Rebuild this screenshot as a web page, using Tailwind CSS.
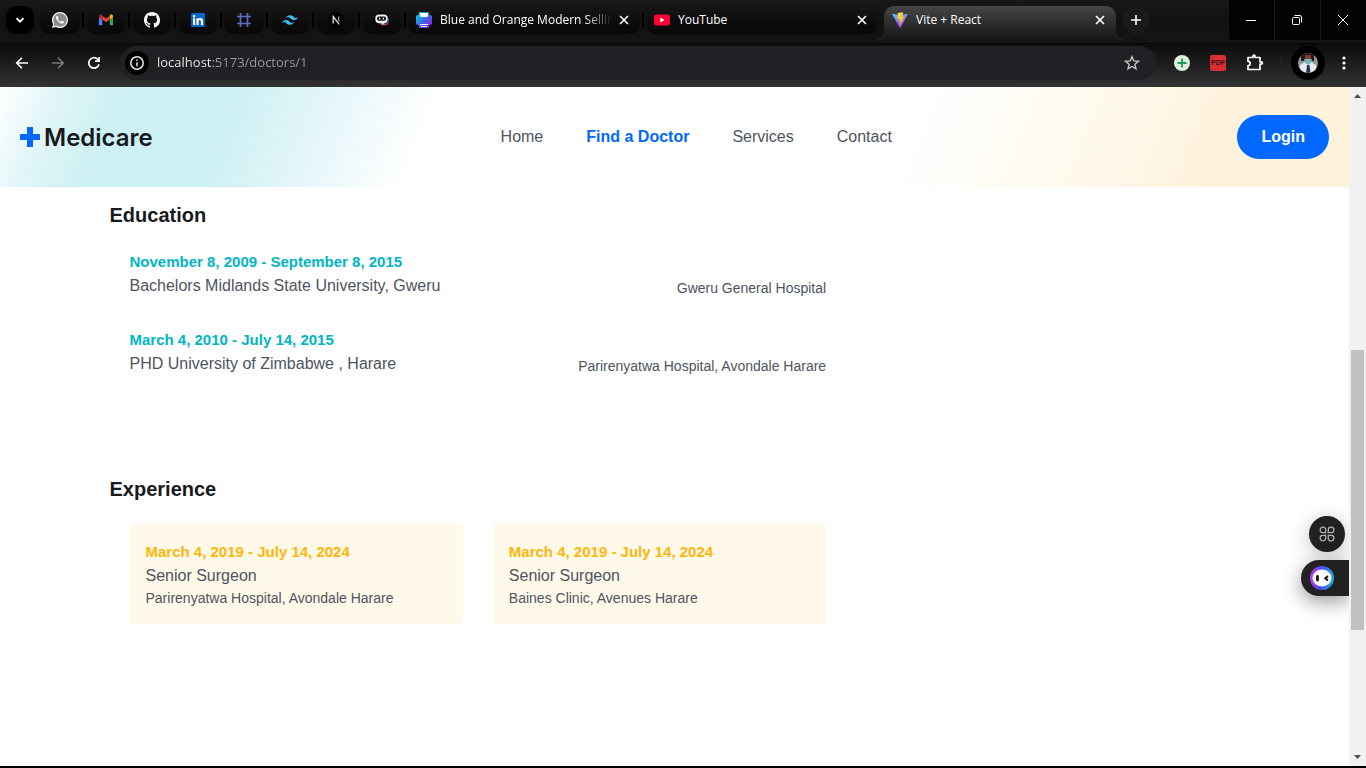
<!DOCTYPE html>
<html lang="en">
<head>
<meta charset="utf-8">
<title>Vite + React</title>
<script src="https://cdn.jsdelivr.net/npm/@tailwindcss/browser@4"></script>
</head>
<body class="flex h-screen flex-col overflow-hidden bg-black pb-0.5 font-['Liberation_Sans',Arial,sans-serif]">

<!-- Tab strip -->
<div class="flex h-[43px] shrink-0 items-start bg-linear-to-b from-[#181818] via-[#111111] to-[#141414] font-['Open_Sans','Noto_Sans',sans-serif] text-xs text-white">
  <button aria-label="Search tabs" class="mt-1.5 ml-1.5 flex size-7 shrink-0 items-center justify-center rounded-[10px] bg-black">
    <svg class="size-4" viewBox="0 0 16 16" fill="none" stroke="#fff" stroke-width="1.8"><path d="M4.5 6.2 8 9.7l3.5-3.5"/></svg>
  </button>

  <div class="mt-1.5 ml-1.5 flex min-w-0 items-center gap-0.5">
    <button aria-label="WhatsApp" class="flex h-7 w-10 items-center justify-center rounded-b-[10px] bg-linear-to-b from-[#161616] to-[#070707]">
      <svg class="size-4" viewBox="0 0 24 24"><path fill="#f1f1f1" d="M12 0A12 12 0 0 0 1.700 18.100L0 24l6-1.600A12 12 0 1 0 12 0z"/><path fill="#8d8d8d" d="M12 2a10 10 0 0 0-8.500 15.300l-1 3.900 4-1A10 10 0 1 0 12 2z"/><path fill="#fff" d="M8.500 6.500c-.5-.9-1.200-.5-1.700 0-1.200 1.300-.9 3.300.3 5 1.900 2.900 4.500 5.300 7.800 5.900 1.500.2 3-.9 3-2.500 0-.7-2.600-1.900-3.100-1.800-.6.200-1 1.600-1.600 1.500-1.900-.5-3.600-2.300-4.300-3.800-.2-.6 1-1.200.9-1.900z"/></svg>
    </button>
    <span class="h-4 w-0.5 bg-black"></span>
    <button aria-label="Gmail" class="flex h-7 w-10 items-center justify-center rounded-b-[10px] bg-linear-to-b from-[#161616] to-[#070707]">
      <svg class="size-3.5" viewBox="0 2 24 20"><path fill="#4285f4" d="M1.500 21h4V11L0 7v12.500c0 .8.700 1.500 1.500 1.500z"/><path fill="#34a853" d="M18.500 21h4c.8 0 1.500-.7 1.500-1.500V7l-5.500 4z"/><path fill="#fbbc04" d="M18.500 4.500V11L24 7V5.500c0-2.500-2.600-3.700-4.500-2.300z"/><path fill="#ea4335" d="M5.500 11V4.500l6.500 5 6.500-5V11L12 16z"/><path fill="#c5221f" d="M0 5.500V7l5.500 4V4.500l-1-1.300C2.600 1.800 0 3 0 5.500z"/></svg>
    </button>
    <span class="h-4 w-0.5 bg-black"></span>
    <button aria-label="GitHub" class="flex h-7 w-10 items-center justify-center rounded-b-[10px] bg-linear-to-b from-[#161616] to-[#070707]">
      <svg class="size-4" viewBox="0 0 16 16" fill="#fff"><path d="M8 0C3.580 0 0 3.580 0 8c0 3.540 2.290 6.530 5.470 7.590.4.070.55-.17.55-.38 0-.19-.01-.82-.01-1.490-2.010.37-2.530-.49-2.690-.94-.09-.23-.48-.94-.82-1.130-.28-.15-.68-.52-.01-.53.63-.01 1.080.58 1.230.82.72 1.210 1.870.87 2.330.66.070-.52.28-.87.51-1.070-1.780-.2-3.640-.89-3.640-3.950 0-.87.31-1.590.82-2.150-.08-.2-.36-1.020.08-2.120 0 0 .67-.21 2.200.82.64-.18 1.320-.27 2-.27s1.360.09 2 .27c1.530-1.040 2.200-.82 2.200-.82.44 1.100.16 1.920.08 2.120.51.56.82 1.270.82 2.150 0 3.070-1.870 3.750-3.650 3.950.29.25.54.73.54 1.480 0 1.070-.01 1.930-.01 2.200 0 .21.15.46.55.38A8.010 8.010 0 0 0 16 8c0-4.420-3.580-8-8-8z"/></svg>
    </button>
    <span class="h-4 w-0.5 bg-black"></span>
    <button aria-label="LinkedIn" class="flex h-7 w-10 items-center justify-center rounded-b-[10px] bg-linear-to-b from-[#161616] to-[#070707]">
      <svg class="size-3.5" viewBox="0 0 24 24"><rect width="24" height="24" rx="2" fill="#0a66c2"/><path fill="#fff" d="M3.500 9h3.600v11.500H3.500zM5.300 3.300a2.100 2.100 0 1 1 0 4.200 2.100 2.100 0 0 1 0-4.200zM9.400 9h3.400v1.600c.5-.9 1.700-1.900 3.500-1.900 3.600 0 4.300 2.400 4.300 5.500v6.300H17v-5.600c0-1.300 0-3-1.900-3s-2.100 1.400-2.100 2.900v5.700H9.400z"/></svg>
    </button>
    <span class="h-4 w-0.5 bg-black"></span>
    <button aria-label="Hashnode" class="flex h-7 w-10 items-center justify-center rounded-b-[10px] bg-linear-to-b from-[#161616] to-[#070707]">
      <svg class="size-4" viewBox="0 0 16 16" fill="none" stroke="#5b6ec0" stroke-width="1.700"><path d="M4.500 1v14M11.500 1v14M1 4.500h14M1 11.500h14"/></svg>
    </button>
    <span class="h-4 w-0.5 bg-black"></span>
    <button aria-label="Tailwind CSS" class="flex h-7 w-10 items-center justify-center rounded-b-[10px] bg-linear-to-b from-[#161616] to-[#070707]">
      <svg class="size-4" viewBox="0 0 24 24" fill="#38bdf8"><path d="M12 4.800c-3.200 0-5.200 1.600-6 4.800 1.200-1.600 2.600-2.200 4.200-1.800.9.200 1.600.9 2.300 1.700C13.700 10.700 15.100 12 18 12c3.200 0 5.200-1.600 6-4.800-1.200 1.600-2.600 2.200-4.200 1.800-.9-.2-1.600-.9-2.300-1.700C16.300 6.100 14.900 4.800 12 4.800zM6 12c-3.200 0-5.200 1.600-6 4.800 1.200-1.600 2.600-2.200 4.200-1.800.9.200 1.600.9 2.300 1.700C7.700 17.900 9.100 19.200 12 19.200c3.200 0 5.200-1.600 6-4.800-1.200 1.600-2.600 2.200-4.200 1.800-.9-.2-1.600-.9-2.300-1.700C10.300 13.300 8.900 12 6 12z"/></svg>
    </button>
    <span class="h-4 w-0.5 bg-black"></span>
    <button aria-label="Next.js" class="flex h-7 w-10 items-center justify-center rounded-b-[10px] bg-linear-to-b from-[#161616] to-[#070707]">
      <svg class="size-4" viewBox="0 0 16 16"><circle cx="8" cy="8" r="8" fill="#000"/><path d="M5.200 11.500v-7l6 7.800" fill="none" stroke="#ddd" stroke-width="1.300"/><path d="M10.700 4.500v5" stroke="#aaa" stroke-width="1.200"/></svg>
    </button>
    <span class="h-4 w-0.5 bg-black"></span>
    <button aria-label="Chat" class="flex h-7 w-10 items-center justify-center rounded-b-[10px] bg-linear-to-b from-[#161616] to-[#070707]">
      <svg class="size-4" viewBox="0 0 16 16"><circle cx="8" cy="8" r="8" fill="#000"/><path d="M5 11.500h6c2 0 3-1.500 3-4l.3 4.500-2.300 1.500H8z" fill="#a33a78"/><path d="M14 5.500c.9 1.500.9 4-.3 5.500" fill="none" stroke="#4b62c9"/><path d="M5 2.500h5A3.700 3.700 0 0 1 13.700 6.200v1.300A3.700 3.700 0 0 1 10 11.200L8.500 13 7.500 11.200H5A3.700 3.700 0 0 1 1.300 7.500V6.200A3.700 3.700 0 0 1 5 2.500z" fill="#eee"/><rect x="3" y="4.500" width="9" height="4.300" rx="2" fill="#111"/><path d="M5.700 5.700v1.700M9.300 5.700v1.700" stroke="#fff" stroke-width="1.300"/></svg>
    </button>
    <span class="h-4 w-0.5 bg-black"></span>
    <div class="flex h-7 w-58 items-center rounded-b-[10px] bg-linear-to-b from-[#161616] to-[#070707] px-2">
      <svg class="size-4 shrink-0" viewBox="0 0 16 16"><defs><linearGradient id="cube" x1="0" y1="0" x2="1" y2="1"><stop offset=".1" stop-color="#06c8d5"/><stop offset=".5" stop-color="#356ce6"/><stop offset=".85" stop-color="#8427e6"/></linearGradient></defs><path d="M3 0h10v2l3 2v8l-3 2v2H3v-2l-3-2V4l3-2z" fill="url(#cube)"/><path d="M4 1h8v3l-1 1H5L4 4zM4 12h8v1H4zM5 14h6v1H5z" fill="#fff"/></svg>
      <button class="ml-2 min-w-0 flex-1 text-left whitespace-nowrap mask-r-from-84% mask-r-to-100%">Blue and Orange Modern Sellin</button>
      <button aria-label="Close tab" class="ml-1 flex size-4 shrink-0 items-center justify-center"><svg class="size-2.5" viewBox="0 0 10 10" stroke="#fff" stroke-width="1.600"><path d="m1 1 8 8M9 1 1 9"/></svg></button>
    </div>
    <span class="h-4 w-0.5 bg-black"></span>
    <div class="flex h-7 w-58 items-center rounded-b-[10px] bg-linear-to-b from-[#161616] to-[#070707] px-2">
      <svg class="size-4 shrink-0" viewBox="0 0 16 16"><rect y="2.500" width="16" height="11" rx="2.500" fill="#ff0033"/><path d="m6.300 5.600 4.200 2.400-4.200 2.400z" fill="#fff"/></svg>
      <button class="ml-2 min-w-0 flex-1 overflow-hidden text-left whitespace-nowrap">YouTube</button>
      <button aria-label="Close tab" class="ml-1 flex size-4 shrink-0 items-center justify-center"><svg class="size-2.5" viewBox="0 0 10 10" stroke="#fff" stroke-width="1.600"><path d="m1 1 8 8M9 1 1 9"/></svg></button>
    </div>
  </div>

  <div class="relative mt-1.5 ml-1.5 flex h-[37px] w-58 shrink-0 items-start rounded-t-[10px] bg-linear-to-b from-[#464646] to-[#141414] px-2 pt-1.5">
    <span class="absolute bottom-[3px] -left-2.5 size-2.5 bg-[radial-gradient(circle_at_0_0,transparent_10px,#1e1e1e_10px)]"></span>
    <span class="absolute -right-2.5 bottom-[3px] size-2.5 bg-[radial-gradient(circle_at_100%_0,transparent_10px,#1e1e1e_10px)]"></span>
    <svg class="size-4 shrink-0" viewBox="0 0 32 32"><defs><linearGradient id="va" x1="0" y1="0" x2=".6" y2="1"><stop stop-color="#41d1ff"/><stop offset="1" stop-color="#bd34fe"/></linearGradient><linearGradient id="vb" x1=".4" y1="0" x2=".6" y2="1"><stop stop-color="#ffea83"/><stop offset=".1" stop-color="#ffdd35"/><stop offset="1" stop-color="#ffa800"/></linearGradient></defs><path fill="url(#va)" d="M31.800 4.700 17 31.200c-.3.500-1 .5-1.400 0L.2 4.700c-.4-.6.1-1.300.8-1.200L16 6.200l15-2.700c.7-.1 1.200.6.800 1.200z"/><path fill="url(#vb)" d="m23 .1-11 2.100c-.2 0-.3.200-.3.400L11 14c0 .3.200.5.500.4l3-.7c.3-.1.600.2.500.5l-.9 4.500c-.1.300.2.600.5.500l1.900-.6c.3-.1.600.2.500.5l-1.500 7c-.1.500.5.700.7.300l8.300-16.800c.1-.3-.1-.6-.5-.6l-3.200.600c-.3.100-.5-.2-.5-.5l2.300-8.300c.1-.4-.2-.7-.5-.7z"/></svg>
    <button class="ml-2 min-w-0 flex-1 overflow-hidden text-left whitespace-nowrap">Vite + React</button>
    <button aria-label="Close tab" class="ml-1 flex size-4 shrink-0 items-center justify-center"><svg class="size-2.5" viewBox="0 0 10 10" stroke="#fff" stroke-width="1.600"><path d="m1 1 8 8M9 1 1 9"/></svg></button>
  </div>
  <button aria-label="New tab" class="mt-1.5 ml-1.5 flex size-7 shrink-0 items-center justify-center rounded-full bg-[#1a1a1a]">
    <svg class="size-2.5" viewBox="0 0 10 10" stroke="#fff" stroke-width="1.600"><path d="M0 5h10M5 0v10"/></svg>
  </button>

  <div class="ml-auto flex h-10 shrink-0 gap-px bg-[#181818]">
    <button aria-label="Minimize" class="flex w-[45px] items-center justify-center bg-[#020202] pr-0.5"><svg class="size-2.5" viewBox="0 0 10 10" stroke="#fff"><path d="M0 5.500h10"/></svg></button>
    <button aria-label="Restore" class="flex w-[45px] items-center justify-center bg-[#020202] pr-0.5"><svg class="size-2.5" viewBox="0 0 10 10" fill="none" stroke="#fff"><rect x=".5" y="2.500" width="7" height="7" rx="1"/><path d="M2.500.5H8A1.500 1.500 0 0 1 9.500 2v5.500"/></svg></button>
    <button aria-label="Close" class="flex w-[45px] items-center justify-center bg-[#020202] pr-0.5"><svg class="size-2.5" viewBox="0 0 10 10" stroke="#fff"><path d="m0 0 10 10M10 0 0 10"/></svg></button>
  </div>
</div>

<!-- Toolbar -->
<div class="flex h-11 shrink-0 items-center border-t border-[#070707] bg-linear-to-b from-[#0c0c0c] to-[#333333] px-[14px] pb-1.5">
  <button aria-label="Back" class="flex size-4 shrink-0 items-center justify-center"><svg class="size-4" viewBox="0 0 16 16" fill="none" stroke="#fff" stroke-width="1.600"><path d="M14 8H3M8 2.700 2.700 8 8 13.300"/></svg></button>
  <button aria-label="Forward" class="ml-5 flex size-4 shrink-0 items-center justify-center"><svg class="size-4" viewBox="0 0 16 16" fill="none" stroke="#777" stroke-width="1.600"><path d="M2 8h11M8 2.700 13.300 8 8 13.300"/></svg></button>
  <button aria-label="Reload" class="ml-5 flex size-4 shrink-0 items-center justify-center"><svg class="size-4" viewBox="0 0 16 16" fill="none" stroke="#fff" stroke-width="1.700"><path d="M13 9.200A5.200 5.200 0 1 1 11.700 4.300L13 5.600"/><path d="M13.100 2v4.200H9"/></svg></button>
  <div class="ml-[18px] flex h-[34px] min-w-0 flex-1 items-center rounded-full bg-[#202124] pr-4 pl-[5px]">
    <button aria-label="Site information" class="flex size-6 shrink-0 items-center justify-center rounded-full bg-black"><svg class="size-4" viewBox="0 0 16 16" fill="none" stroke="#e8e8e8" stroke-width="1.500"><circle cx="8" cy="8" r="6.200"/><path d="M8 7.200v4M8 4.500V6"/></svg></button>
    <input aria-label="Address" value="localhost:5173/doctors/1" class="ml-2 min-w-0 flex-1 bg-[linear-gradient(90deg,#f1f1f1_55px,#9a9da1_55px)] bg-clip-text font-['Open_Sans','Noto_Sans',sans-serif] text-[13px] text-transparent outline-none">
    <button aria-label="Bookmark this tab" class="flex size-4 shrink-0 items-center justify-center"><svg class="size-4" viewBox="0 0 16 16" fill="none" stroke="#c6c6c6" stroke-width="1.400"><path d="m8 1.600 1.800 4.300 4.700.4-3.600 3 1.100 4.600L8 11.500l-4 2.400 1.100-4.600-3.600-3 4.700-.4z"/></svg></button>
  </div>
  <button aria-label="Add extension" class="ml-[18px] flex size-4 shrink-0 items-center justify-center"><svg class="size-4" viewBox="0 0 16 16"><circle cx="8" cy="8" r="8" fill="#dff0dc"/><path d="M8 3.500v9M3.500 8h9" stroke="#16995a" stroke-width="1.800"/></svg></button>
  <button aria-label="PDF tools" class="ml-5 flex size-4 shrink-0 items-center justify-center rounded-xs bg-[#d93033] text-[7px] leading-4 font-bold text-[#3a0d10]">PDF</button>
  <button aria-label="Extensions" class="ml-5 flex size-[18px] shrink-0 items-center justify-center"><svg class="size-[18px]" viewBox="0 0 18 18" fill="none" stroke="#fff" stroke-width="1.700" stroke-linejoin="round"><path d="M2 3.500h5V2.200a1 1 0 0 1 2 0v1.300h5v4.300h1.200a1.200 1.200 0 0 1 0 2.400H14v5.300H2v-3.800a2.200 2.200 0 0 0 0-4.400z"/></svg></button>
  <span class="ml-4 h-4 w-0.5 bg-[#222222]"></span>
  <button aria-label="Profile" class="ml-[9px] flex size-[34px] shrink-0 items-center justify-center rounded-full bg-black"><svg class="size-5" viewBox="0 0 20 20"><defs><clipPath id="face"><circle cx="10" cy="10" r="10"/></clipPath></defs><g clip-path="url(#face)"><path fill="#8f9a9d" d="M0 0h20v20H0z"/><path fill="#2a1713" d="M3 0h13v8H3z"/><path fill="#7a4030" d="M7 2h6v5H7z"/><path fill="#e6ebef" d="m1 20 1-8 5-3h6l5 3 1 8z"/><path fill="#72b8b8" d="M6 6h8l-1 4-3 2-3-2z"/><path fill="#26384f" d="M9 12h2.500l1 8H8z"/></g></svg></button>
  <button aria-label="Menu" class="ml-[11px] flex size-4 shrink-0 items-center justify-center"><svg class="size-4" viewBox="0 0 16 16" fill="#fff"><circle cx="8" cy="3" r="1.600"/><circle cx="8" cy="8" r="1.600"/><circle cx="8" cy="13" r="1.600"/></svg></button>
</div>

<!-- Page viewport -->
<div class="flex min-h-0 flex-1">
  <div class="relative min-w-0 flex-1 overflow-hidden bg-white">
    <header class="flex h-25 items-center justify-between bg-[linear-gradient(112deg,#ffffff_0,#e3f6f8_4%,#ccf0f3_9%,#ccf0f3_17%,#e1f5f9_23%,#ffffff_32%,#ffffff_67%,#fffaf0_78%,#fff2dc_90%,#fff2dc_100%)] px-5">
      <a href="#" class="flex w-[135px] items-center gap-1">
        <svg class="size-5 shrink-0" viewBox="0 0 20 20" fill="#0067ff"><path d="M7.500 0h5a.5.5 0 0 1 .5.5V7h6.500a.5.5 0 0 1 .5.5v5a.5.5 0 0 1-.5.5H13v6.500a.5.5 0 0 1-.5.5h-5a.5.5 0 0 1-.5-.5V13H.5a.5.5 0 0 1-.5-.5v-5A.5.5 0 0 1 .5 7H7V.5a.5.5 0 0 1 .5-.5z"/></svg>
        <span class="pt-0.5 font-['Inter',sans-serif] text-2xl font-semibold text-[#181a1e]">Medicare</span>
      </a>
      <nav class="flex gap-[43px] text-base text-[#4e545f]">
        <a href="#">Home</a>
        <a href="#" class="font-bold text-[#0067ff]">Find a Doctor</a>
        <a href="#">Services</a>
        <a href="#">Contact</a>
      </nav>
      <button class="h-11 rounded-full bg-[#0067ff] px-6 pb-px text-base font-bold text-white">Login</button>
    </header>

    <main class="mx-auto grid max-w-[1170px] grid-cols-3 gap-[50px] px-5 pt-[13px] text-[#4e545f]">
      <div class="col-span-2">
        <section>
          <h3 class="text-xl/[30px] font-bold text-[#181a1e]">Education</h3>
          <ul class="flex flex-col gap-[30px] p-5">
            <li class="flex items-end justify-between">
              <div>
                <p class="text-[15px]/6 font-bold text-[#01b5c5]">November 8, 2009 - September 8, 2015</p>
                <p class="text-base/6">Bachelors Midlands State University, Gweru</p>
              </div>
              <p class="text-sm/5">Gweru General Hospital</p>
            </li>
            <li class="flex items-end justify-between">
              <div>
                <p class="text-[15px]/6 font-bold text-[#01b5c5]">March 4, 2010 - July 14, 2015</p>
                <p class="text-base/6">PHD University of Zimbabwe , Harare</p>
              </div>
              <p class="text-sm/5">Parirenyatwa Hospital, Avondale Harare</p>
            </li>
          </ul>
        </section>
        <section class="mt-[78px]">
          <h3 class="text-xl/[30px] font-bold text-[#181a1e]">Experience</h3>
          <ul class="grid grid-cols-2 gap-[30px] p-5">
            <li class="rounded bg-[#fff9ea] p-4">
              <p class="text-[15px]/6 font-bold text-[#feb60d]">March 4, 2019 - July 14, 2024</p>
              <p class="text-base/6">Senior Surgeon</p>
              <p class="text-sm/5">Parirenyatwa Hospital, Avondale Harare</p>
            </li>
            <li class="rounded bg-[#fff9ea] p-4">
              <p class="text-[15px]/6 font-bold text-[#feb60d]">March 4, 2019 - July 14, 2024</p>
              <p class="text-base/6">Senior Surgeon</p>
              <p class="text-sm/5">Baines Clinic, Avenues Harare</p>
            </li>
          </ul>
        </section>
      </div>
    </main>

    <!-- Floating assistant -->
    <div class="absolute right-0 bottom-[170px] flex flex-col items-end gap-2">
      <button aria-label="Assistant apps" class="mr-1 flex size-9 items-center justify-center rounded-full bg-[#212121] shadow-[0_4px_20px_rgba(0,0,0,0.25)]"><svg class="size-4" viewBox="0 0 16 16" fill="none" stroke="#b0b0b0" stroke-width="1.300"><path d="M6.700 6.700H3.700A2.500 2.500 0 0 1 1.200 4.200V3.700A2.500 2.500 0 0 1 3.700 1.200H4.200A2.500 2.500 0 0 1 6.700 3.700zM9.300 6.700V3.700A2.500 2.500 0 0 1 11.800 1.200H12.300A2.500 2.500 0 0 1 14.800 3.700V4.200A2.500 2.500 0 0 1 12.300 6.700zM6.700 9.300V12.300A2.500 2.500 0 0 1 4.200 14.800H3.700A2.500 2.500 0 0 1 1.200 12.300V11.800A2.500 2.500 0 0 1 3.700 9.300zM9.300 9.300H12.300A2.500 2.500 0 0 1 14.800 11.800V12.300A2.500 2.500 0 0 1 12.300 14.800H11.800A2.500 2.500 0 0 1 9.300 12.300z"/></svg></button>
      <button aria-label="Open assistant" class="flex h-9 w-12 items-center rounded-l-full bg-[#212121] pl-[9px] shadow-[0_6px_20px_rgba(0,0,0,0.4)]"><svg class="size-6" viewBox="0 0 24 24"><defs><linearGradient id="bot" x1="0" y1=".7" x2="1" y2=".8"><stop stop-color="#b83df0"/><stop offset=".45" stop-color="#4a4af5"/><stop offset="1" stop-color="#12b8e0"/></linearGradient></defs><circle cx="12" cy="12" r="12" fill="url(#bot)"/><ellipse cx="12" cy="12" rx="9.500" ry="8.500" fill="#fff"/><path d="M7.500 10.500v3.500" stroke="#111" stroke-width="2.800" stroke-linecap="round"/><path d="m18 10-2.700 2.200L18 14.500" fill="none" stroke="#111" stroke-width="2"/></svg></button>
    </div>
  </div>

  <!-- Scrollbar -->
  <div class="flex w-[17px] shrink-0 flex-col items-center bg-[#f1f1f1]">
    <svg class="size-[17px] shrink-0" viewBox="0 0 17 17" fill="#505050"><path d="M5 11h7L8.500 7z"/></svg>
    <span class="grow-246"></span>
    <span class="w-[13px] grow-280 bg-[#c1c1c1]"></span>
    <span class="grow-119"></span>
    <svg class="size-[17px] shrink-0" viewBox="0 0 17 17" fill="#505050"><path d="M5 6h7l-3.500 4z"/></svg>
  </div>
</div>
</body>
</html>
